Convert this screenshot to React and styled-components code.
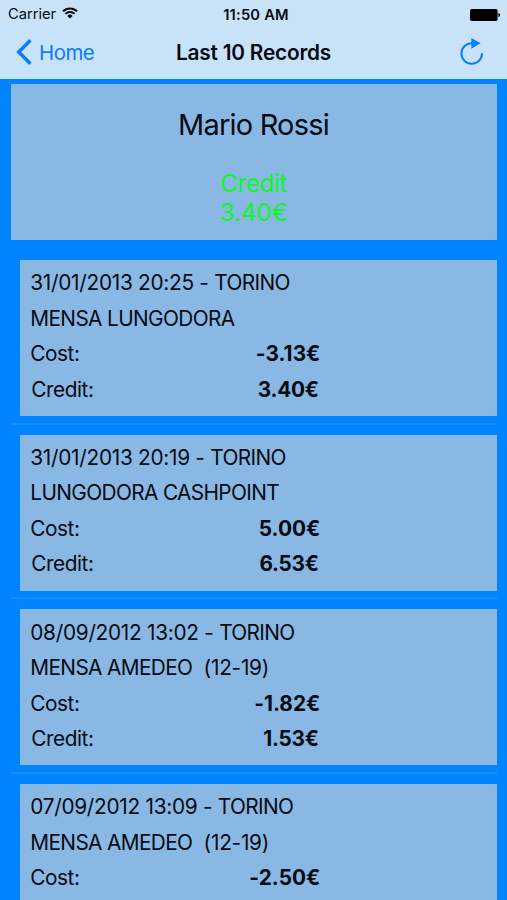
import styled, { createGlobalStyle } from 'styled-components'

const records = [
  { date: '31/01/2013 20:25', city: 'TORINO', place: 'MENSA LUNGODORA', cost: '-3.13€', credit: '3.40€' },
  { date: '31/01/2013 20:19', city: 'TORINO', place: 'LUNGODORA CASHPOINT', cost: '5.00€', credit: '6.53€' },
  { date: '08/09/2012 13:02', city: 'TORINO', place: 'MENSA AMEDEO', hours: '  (12-19)', cost: '-1.82€', credit: '1.53€' },
  { date: '07/09/2012 13:09', city: 'TORINO', place: 'MENSA AMEDEO', hours: '  (12-19)', cost: '-2.50€' },
]

const App = () => {
  return (
    <Screen>
      <GlobalStyle />
      <Header>
        <StatusBar>
          <Carrier>
            Carrier
            <WifiIcon />
          </Carrier>
          <Clock>11:50 AM</Clock>
          <BatteryIcon />
        </StatusBar>
        <NavBar>
          <BackButton>
            <BackIcon />
            Home
          </BackButton>
          <Title>Last 10 Records</Title>
          <RefreshButton aria-label="Refresh">
            <RefreshIcon />
          </RefreshButton>
        </NavBar>
      </Header>

      <Summary>
        <Name>Mario Rossi</Name>
        <Balance>
          Credit
          <span>3.40€</span>
        </Balance>
      </Summary>

      <List>
        {records.map((record) => (
          <Row key={record.date}>
            <Card>
              <Line>
                <When>{record.date} - <Caps>{record.city}</Caps></When>
              </Line>
              <Line>
                <Caps>{record.place}<Hours>{record.hours}</Hours></Caps>
              </Line>
              <Line>
                Cost:
                <Amount>{record.cost}</Amount>
              </Line>
              {record.credit && (
                <Line $indent>
                  Credit:
                  <Amount $inset>{record.credit}</Amount>
                </Line>
              )}
            </Card>
          </Row>
        ))}
      </List>
    </Screen>
  )
}

export default App

const WifiIcon = () => (
  <svg width="16" height="12" viewBox="0 0 16 12" fill="none" stroke="#06090c" strokeWidth="1.9">
    <path d="M1 4.3A10 10 0 0 1 15 4.3" />
    <path d="M3.4 6.9A6.5 6.5 0 0 1 12.6 6.9" />
    <path d="M8 11.6L5.4 8.9A3.7 3.7 0 0 1 10.6 8.9Z" fill="#06090c" stroke="none" />
  </svg>
)

const BatteryIcon = () => (
  <svg width="31" height="12" viewBox="0 0 31 12" fill="#000">
    <rect x="0" y="0" width="27.6" height="12" rx="1.8" />
    <path d="M28.4 4C30.7 4.4 30.7 7.6 28.4 8Z" />
  </svg>
)

const BackIcon = () => (
  <svg width="16" height="26" viewBox="0 0 16 26" fill="none" stroke="#0a7cff" strokeWidth="3.5">
    <path d="M14.4 1.3L2.7 13L14.4 24.7" />
  </svg>
)

const RefreshIcon = () => (
  <svg width="24" height="28" viewBox="0 0 24 28" fill="none">
    <path d="M22 15.2A10.3 10.3 0 1 1 11.7 5.2H13" stroke="#0a7cff" strokeWidth="2" />
    <path d="M11.3 0L20.6 5.2L11.3 10.7Z" fill="#0a7cff" />
  </svg>
)

const GlobalStyle = createGlobalStyle`
  * {
    box-sizing: border-box;
  }
  body {
    margin: 0;
    background: #0084ff;
    font-family: Inter, "Liberation Sans", sans-serif;
    color: #050b12;
  }
`

const Screen = styled.div`
  width: 507px;
  height: 900px;
  overflow: hidden;
  background: #0084ff;
`

const Header = styled.header`
  height: 79px;
  background: #c8e2f8;
`

const StatusBar = styled.div`
  display: grid;
  grid-template-columns: 1fr auto 1fr;
  align-items: center;
  height: 27px;
  padding: 0 6px 0 8px;

  > svg {
    justify-self: end;
  }
`

const Carrier = styled.div`
  display: flex;
  align-items: center;
  gap: 6px;
  font-size: 14.7px;
  line-height: 29px;
  letter-spacing: 0;

  svg {
    margin-bottom: 3px;
  }
`

const Clock = styled.div`
  padding-left: 3px;
  font-size: 14.7px;
  font-weight: 600;
  letter-spacing: 0.2px;
`

const NavBar = styled.nav`
  display: grid;
  grid-template-columns: 1fr auto 1fr;
  align-items: center;
  height: 50px;
  padding: 0 23px 0 16px;
`

const BackButton = styled.button`
  display: flex;
  align-items: center;
  gap: 7px;
  padding: 0;
  border: 0;
  background: none;
  color: #0a7cff;
  font: inherit;
  font-size: 20.4px;
  letter-spacing: -0.5px;
`

const Title = styled.h1`
  margin: 0;
  padding-left: 7px;
  font-size: 20.8px;
  font-weight: 600;
  letter-spacing: -0.2px;
`

const RefreshButton = styled.button`
  display: flex;
  justify-self: end;
  padding: 0;
  border: 0;
  background: none;
`

const Summary = styled.section`
  height: 156px;
  margin: 5px 10px 0 11px;
  padding-top: 22px;
  background: #8ab8e5;
  text-align: center;
`

const Name = styled.h2`
  margin: 0;
  padding-right: 1px;
  font-size: 29px;
  font-weight: 400;
  line-height: 38px;
  letter-spacing: -0.8px;
`

const Balance = styled.p`
  margin: 25px 0 0;
  padding-right: 1px;
  color: #10f527;
  font-size: 24.5px;
  line-height: 28.5px;
  letter-spacing: -0.6px;

  span {
    display: block;
    letter-spacing: -0.25px;
  }
`

const List = styled.div`
  padding: 10px 10px 0 11px;
`

const Row = styled.div`
  height: 174.7px;
  padding: 10px 0 0 9.4px;
  border-bottom: 2px solid #1c8dfd;
`

const Card = styled.article`
  height: 156px;
  padding: 5.2px 10px 0 9.9px;
  background: #8ab8e5;
`

const Line = styled.div`
  display: grid;
  grid-template-columns: 1fr 178px;
  align-items: center;
  height: 35.4px;
  padding-left: ${props => props.$indent ? '1px' : '0'};
  font-size: 20.8px;
  letter-spacing: -0.45px;
  white-space: pre;
`

const When = styled.span`
  letter-spacing: -0.28px;
`

const Caps = styled.span`
  letter-spacing: -0.62px;
`

const Hours = styled.span`
  letter-spacing: -0.25px;
`

const Amount = styled.span`
  justify-self: start;
  width: 12px;
  display: flex;
  justify-content: flex-end;
  margin-left: ${props => props.$inset ? '-2.4px' : '-0.6px'};
  font-weight: 700;
  letter-spacing: ${props => props.$inset ? '-0.3px' : '0.05px'};
`
